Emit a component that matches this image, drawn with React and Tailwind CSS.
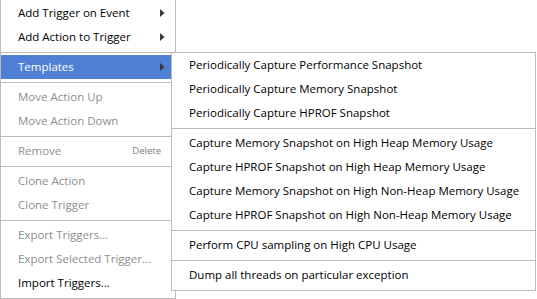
import React from 'react';

const mainItems = [
  { label: 'Add Trigger on Event', arrow: true },
  { label: 'Add Action to Trigger', arrow: true },
  { sep: true },
  { label: 'Templates', arrow: true, active: true },
  { sep: true },
  { label: 'Move Action Up', disabled: true },
  { label: 'Move Action Down', disabled: true },
  { sep: true },
  { label: 'Remove', disabled: true, shortcut: 'Delete' },
  { sep: true },
  { label: 'Clone Action', disabled: true },
  { label: 'Clone Trigger', disabled: true },
  { sep: true },
  { label: 'Export Triggers...', disabled: true },
  { label: 'Export Selected Trigger...', disabled: true },
  { label: 'Import Triggers...' },
];

const templateItems = [
  'Periodically Capture Performance Snapshot',
  'Periodically Capture Memory Snapshot',
  'Periodically Capture HPROF Snapshot',
  null,
  'Capture Memory Snapshot on High Heap Memory Usage',
  'Capture HPROF Snapshot on High Heap Memory Usage',
  'Capture Memory Snapshot on High Non-Heap Memory Usage',
  'Capture HPROF Snapshot on High Non-Heap Memory Usage',
  null,
  'Perform CPU sampling on High CPU Usage',
  null,
  'Dump all threads on particular exception',
];

function Separator() {
  return (
    <div className="h-[6px] pt-[3px]">
      <div className="h-px bg-[#bdbdbd]" />
    </div>
  );
}

function Arrow() {
  return (
    <svg width="5" height="8" viewBox="0 0 5 8" className="shrink-0">
      <polygon points="0,0 4.5,4 0,8" fill="#3a3a3a" />
    </svg>
  );
}

export default function App() {
  return (
    <div className="relative w-[537px] h-[299px] bg-white overflow-hidden font-['Open_Sans',sans-serif] text-[11.5px] leading-none">
      {/* main context menu */}
      <div className="w-[176px] border-x border-b border-[#bcbcbc] bg-white pt-[1px] pb-[3px]">
        {mainItems.map((item, i) => {
          if (item.sep) return <Separator key={i} />;
          return (
            <div
              key={i}
              className={`flex items-center h-[24px] pl-[17px] pr-[10px] ${
                item.active
                  ? 'bg-[#4f80d6] text-white'
                  : item.disabled
                  ? 'text-[#8e8e8e]'
                  : 'text-black'
              }`}
            >
              <span className="flex-1 whitespace-nowrap">{item.label}</span>
              {item.shortcut && (
                <span className="text-[9.5px] text-[#7a7a8a] pr-[4px]">{item.shortcut}</span>
              )}
              {item.arrow && <Arrow />}
            </div>
          );
        })}
      </div>

      {/* templates submenu */}
      <div className="absolute left-[171px] top-[52px] w-[365px] border border-[#bcbcbc] bg-white pb-[3px]">
        {templateItems.map((label, i) =>
          label === null ? (
            <Separator key={i} />
          ) : (
            <div key={i} className="flex items-center h-[24px] pl-[17px] text-black whitespace-nowrap">
              {label}
            </div>
          )
        )}
      </div>
    </div>
  );
}
